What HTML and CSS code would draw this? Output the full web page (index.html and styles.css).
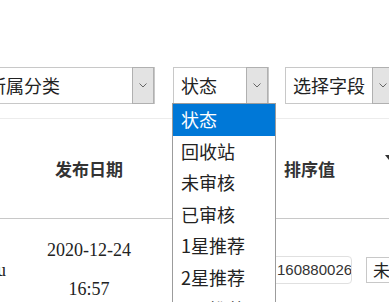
FILE: index.html
```html
<!DOCTYPE html>
<html lang="zh-CN">
<head>
  <meta charset="UTF-8" />
  <title>内容管理</title>
  <link rel="stylesheet" href="styles.css">
</head>
<body>

  <div class="toolbar">
    <div class="select s-cat">
      <span class="select-text">所属分类</span>
      <i class="select-arrow"><svg width="8" height="5" viewBox="0 0 8 5"><polyline points="0.5,0.5 4,4 7.5,0.5" fill="none" stroke="#666" stroke-width="1"/></svg></i>
    </div>
    <div class="select s-status">
      <span class="select-text">状态</span>
      <i class="select-arrow"><svg width="8" height="5" viewBox="0 0 8 5"><polyline points="0.5,0.5 4,4 7.5,0.5" fill="none" stroke="#666" stroke-width="1"/></svg></i>
      <ul class="options">
        <li class="active">状态</li>
        <li>回收站</li>
        <li>未审核</li>
        <li>已审核</li>
        <li>1星推荐</li>
        <li>2星推荐</li>
        <li>3星推荐</li>
        <li>4星推荐</li>
      </ul>
    </div>
    <div class="select s-field">
      <span class="select-text">选择字段</span>
      <i class="select-arrow"><svg width="8" height="5" viewBox="0 0 8 5"><polyline points="0.5,0.5 4,4 7.5,0.5" fill="none" stroke="#666" stroke-width="1"/></svg></i>
    </div>
  </div>

  <div class="table">
    <div class="row head">
      <div class="cell c-title"></div>
      <div class="cell c-date">发布日期</div>
      <div class="cell c-status">状态</div>
      <div class="cell c-sort">排序值</div>
      <div class="cell c-more"><span class="caret"></span></div>
    </div>
    <div class="row">
      <div class="cell c-title">liu</div>
      <div class="cell c-date">2020-12-24<br>16:57</div>
      <div class="cell c-status"></div>
      <div class="cell c-sort">
        <div class="sort-input">1608800264</div>
        <div class="mini-select">未审核</div>
      </div>
      <div class="cell c-more"></div>
    </div>
  </div>

</body>
</html>
```

FILE: styles.css
```css
html, body {
  margin: 0;
  padding: 0;
  overflow: hidden;
  background: #fff;
}
body {
  font-family: "Noto Sans CJK SC", "Noto Sans", sans-serif;
  color: #222;
}
.toolbar {
  display: flex;
  padding-top: 67px;
  margin-left: -21px;
  gap: 18px;
}
.select {
  position: relative;
  flex: none;
  display: flex;
  align-items: stretch;
  height: 37px;
  box-sizing: border-box;
  border: 1px solid #c8c8c8;
  background: #fff;
  font-size: 18px;
}
.s-cat { width: 176px; }
.s-cat .select-text { padding-left: 8px; }
.s-status { width: 96px; }
.s-field { width: 110px; margin-left: -2px; }
.select-text {
  flex: 1;
  padding-left: 7px;
  line-height: 35px;
  white-space: nowrap;
  overflow: hidden;
}
.select-arrow {
  flex: none;
  width: 20px;
  border: 1px solid #b0b0b0;
  background: #e3e3e3;
  display: flex;
  align-items: center;
  justify-content: center;
  margin: -1px 0;
}
.options {
  position: absolute;
  z-index: 10;
  left: -2px;
  top: 35px;
  width: 104px;
  margin: 0;
  padding: 0;
  list-style: none;
  background: #fff;
  border: 1px solid #9c9c9c;
  box-sizing: border-box;
}
.options li {
  height: 31.6px;
  line-height: 31.6px;
  padding-left: 8px;
  font-size: 18px;
  color: #222;
  white-space: nowrap;
}
.options li.active {
  background: #0078d7;
  color: #fff;
}
.table {
  margin-top: 14px;
  margin-left: -40px;
}
.row {
  display: grid;
  grid-template-columns: 46px 166px 96px 117px 60px;
  align-items: center;
  min-height: 102px;
}
.row.head {
  min-height: 99px;
  border-top: 1px solid #ececec;
  border-bottom: 1px solid #c8c8c8;
  font-size: 17px;
  font-weight: bold;
  color: #333;
}
.c-title {
  text-align: right;
  font-family: "Liberation Serif", serif;
  font-size: 18px;
}
.c-date {
  text-align: center;
}
.row:not(.head) .c-date {
  font-family: "Liberation Serif", serif;
  font-size: 18px;
  line-height: 39px;
}
.head .c-sort {
  padding-left: 16px;
}
.row .c-sort {
  display: flex;
  align-items: center;
  gap: 14px;
}
.caret {
  display: block;
  width: 0;
  height: 0;
  margin-top: -14px;
  border-left: 4px solid transparent;
  border-right: 4px solid transparent;
  border-top: 5px solid #333;
}
.sort-input {
  width: 84px;
  height: 28px;
  box-sizing: border-box;
  border: 1px solid #e0e0e0;
  border-radius: 4px;
  padding-left: 8px;
  font-family: "Liberation Sans", sans-serif;
  font-size: 15px;
  line-height: 26px;
  color: #333;
  white-space: nowrap;
  overflow: hidden;
  flex: none;
}
.mini-select {
  flex: none;
  height: 26px;
  box-sizing: border-box;
  border: 1px solid #c8c8c8;
  padding: 0 6px;
  font-size: 17px;
  line-height: 24px;
  white-space: nowrap;
}
```
